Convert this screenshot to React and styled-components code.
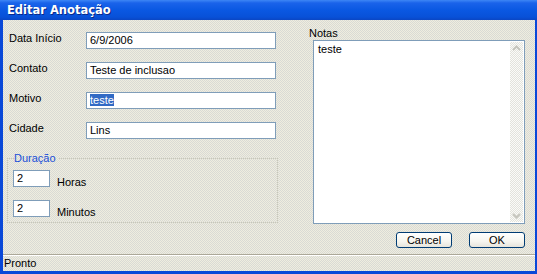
import React from 'react';
import styled, { createGlobalStyle } from 'styled-components';

const GlobalStyle = createGlobalStyle`
  html, body {
    margin: 0;
    padding: 0;
    background: #fff;
  }
  body {
    font-family: "Liberation Sans", Arial, sans-serif;
    font-size: 11px;
    color: #000;
  }
`;

const dither = `
  background-color: #efeddf;
  background-image: conic-gradient(#d9dad5 25%, transparent 0 50%, #d9dad5 0 75%, transparent 0);
  background-size: 2px 2px;
`;

const Window = styled.div`
  width: 537px;
  height: 274px;
  box-sizing: border-box;
  display: flex;
  flex-direction: column;
  border-left: 3px solid #0a48d8;
  border-right: 2px solid #0a48d8;
  border-bottom: 3px solid #0a48d8;
  ${dither}
`;

const TitleBar = styled.div`
  height: 20px;
  flex: none;
  margin: 0 -2px 0 -3px;
  padding-left: 7px;
  display: flex;
  align-items: center;
  color: #fff;
  font-family: "DejaVu Sans", Verdana, sans-serif;
  font-weight: bold;
  font-size: 11.5px;
  background: linear-gradient(to bottom, #3d86f5 0, #1a63ea 3px, #0a58e2 50%, #0851d8 85%, #0a46c4 100%);
  text-shadow: 1px 1px 0 #0a2a8a;
`;

const Body = styled.div`
  flex: 1;
  display: flex;
`;

const LeftCol = styled.div`
  width: 287px;
  flex: none;
  padding: 12px 0 0 6px;
  box-sizing: border-box;
`;

const FieldRow = styled.div`
  display: flex;
  align-items: flex-start;
  height: 17px;
  margin-bottom: 13px;
`;

const Label = styled.span`
  width: 77px;
  line-height: 13px;
`;

const Input = styled.div`
  width: ${p => p.$w || 190}px;
  height: 17px;
  box-sizing: border-box;
  border: 1px solid #7f9db9;
  background: #fff;
  padding-left: 3px;
  line-height: 15px;
  white-space: nowrap;
  overflow: hidden;
`;

const Selected = styled.span`
  background: #316ac5;
  color: #fff;
`;

const Group = styled.fieldset`
  margin: 9px 0 0 -2px;
  width: 271px;
  height: 71px;
  box-sizing: border-box;
  border: 1px dotted #c9c8b6;
  padding: 5px 0 10px 5px;
`;

const Legend = styled.legend`
  color: #1a4fd8;
  margin-left: 1px;
  padding: 0 2px 0 0;
  line-height: 13px;
`;

const DurRow = styled.div`
  display: flex;
  align-items: flex-end;
  gap: 7px;
  & + & {
    margin-top: 13px;
  }
`;

const DurLabel = styled.span`
  line-height: 13px;
  margin-bottom: -2px;
`;

const RightCol = styled.div`
  flex: 1;
  padding: 7px 10px 0 19px;
  display: flex;
  flex-direction: column;
`;

const NotesLabel = styled.div`
  line-height: 13px;
`;

const NotesBox = styled.div`
  margin-left: 4px;
  height: 184px;
  box-sizing: border-box;
  border: 1px solid #7f9db9;
  background: #fff;
  display: flex;
`;

const NotesText = styled.div`
  flex: 1;
  padding: 2px 4px;
  line-height: 13px;
`;

const ScrollBar = styled.div`
  width: 13px;
  margin: 1px 1px 1px 0;
  display: flex;
  flex-direction: column;
  justify-content: space-between;
  background-color: #fbfbf8;
  background-image: conic-gradient(#e3e3dc 25%, transparent 0 50%, #e3e3dc 0 75%, transparent 0);
  background-size: 2px 2px;
`;

const ScrollArrow = styled.svg`
  display: block;
  width: 13px;
  height: 13px;
`;

const ButtonRow = styled.div`
  display: flex;
  justify-content: flex-end;
  gap: 17px;
  margin-top: 8px;
`;

const Button = styled.button`
  width: 56px;
  height: 16px;
  padding: 0;
  font-family: inherit;
  font-size: 11px;
  color: #000;
  border: 1px solid #003c74;
  border-radius: 3px;
  background: linear-gradient(to bottom, #fff 0, #f6f5ef 60%, #e6e4dc 100%);
  line-height: 14px;
`;

const StatusBar = styled.div`
  height: 16px;
  flex: none;
  border-top: 1px solid #aca899;
  box-shadow: inset 0 1px 0 #fff;
  padding-left: 1px;
  line-height: 17px;
  ${dither}
`;

function Arrow({ up }) {
  return (
    <ScrollArrow viewBox="0 0 13 13">
      <path
        d={up ? 'M3 8 L6.5 4.5 L10 8' : 'M3 5 L6.5 8.5 L10 5'}
        fill="none"
        stroke="#c5c5bd"
        strokeWidth="2"
      />
    </ScrollArrow>
  );
}

const fields = [
  { label: 'Data Início', value: '6/9/2006' },
  { label: 'Contato', value: 'Teste de inclusao' },
  { label: 'Motivo', value: 'teste', selected: true },
  { label: 'Cidade', value: 'Lins' },
];

export default function App() {
  return (
    <>
      <GlobalStyle />
      <Window>
        <TitleBar>Editar Anotação</TitleBar>
        <Body>
          <LeftCol>
            {fields.map(f => (
              <FieldRow key={f.label}>
                <Label>{f.label}</Label>
                <Input>{f.selected ? <Selected>{f.value}</Selected> : f.value}</Input>
              </FieldRow>
            ))}
            <Group>
              <Legend>Duração</Legend>
              <DurRow>
                <Input $w={37}>2</Input>
                <DurLabel>Horas</DurLabel>
              </DurRow>
              <DurRow>
                <Input $w={37}>2</Input>
                <DurLabel>Minutos</DurLabel>
              </DurRow>
            </Group>
          </LeftCol>
          <RightCol>
            <NotesLabel>Notas</NotesLabel>
            <NotesBox>
              <NotesText>teste</NotesText>
              <ScrollBar>
                <Arrow up />
                <Arrow />
              </ScrollBar>
            </NotesBox>
            <ButtonRow>
              <Button>Cancel</Button>
              <Button>OK</Button>
            </ButtonRow>
          </RightCol>
        </Body>
        <StatusBar>Pronto</StatusBar>
      </Window>
    </>
  );
}
